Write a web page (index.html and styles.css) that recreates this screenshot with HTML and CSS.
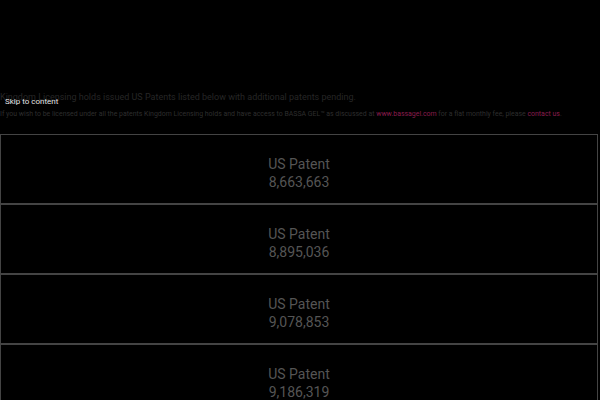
FILE: index.html
```html
<!DOCTYPE html>
<html>
<head>
<meta charset="utf-8">
<link rel="stylesheet" href="styles.css">
</head>
<body>
<a class="skip" href="#content">Skip to content</a>
<main class="page" id="content">
  <div class="intro">
    <p class="lead">Kingdom Licensing holds issued US Patents listed below with additional patents pending.</p>
    <p class="note">If you wish to be licensed under all the patents Kingdom Licensing holds and have access to BASSA GEL™ as discussed at <a href="#">www.bassagel.com</a> for a flat monthly fee, please <a href="#">contact us</a>.</p>
  </div>
  <div class="patents">
    <div class="patent"><span>US Patent</span><span>8,663,663</span></div>
    <div class="patent"><span>US Patent</span><span>8,895,036</span></div>
    <div class="patent"><span>US Patent</span><span>9,078,853</span></div>
    <div class="patent"><span>US Patent</span><span>9,186,319</span></div>
  </div>
</main>
</body>
</html>
```
FILE: styles.css
```css
html, body {
  margin: 0;
  background: #000;
  font-family: Roboto, "Liberation Sans", sans-serif;
}
body {
  overflow: hidden;
  height: 400px;
}
.skip {
  position: absolute;
  left: 5px;
  top: 97px;
  color: #e6e6e6;
  font-size: 8px;
  line-height: 10px;
  text-decoration: none;
}
.page {
  padding-top: 90px;
}
.intro p {
  margin: 0;
}
.lead {
  color: #262626;
  font-size: 9px;
  line-height: 14px;
}
.note {
  color: #2e2e2e;
  font-size: 6.95px;
  line-height: 10px;
  margin-top: 5px !important;
}
.note a {
  color: #8a1d4e;
  text-decoration: none;
}
.patents {
  margin-top: 15px;
  margin-right: 2px;
  display: flex;
  flex-direction: column;
}
.patent {
  border: 1px solid #444;
  display: flex;
  flex-direction: column;
  align-items: center;
  justify-content: center;
  padding-top: 8px;
  height: 60px;
  color: #555;
  font-size: 14px;
  line-height: 18px;
}
```
